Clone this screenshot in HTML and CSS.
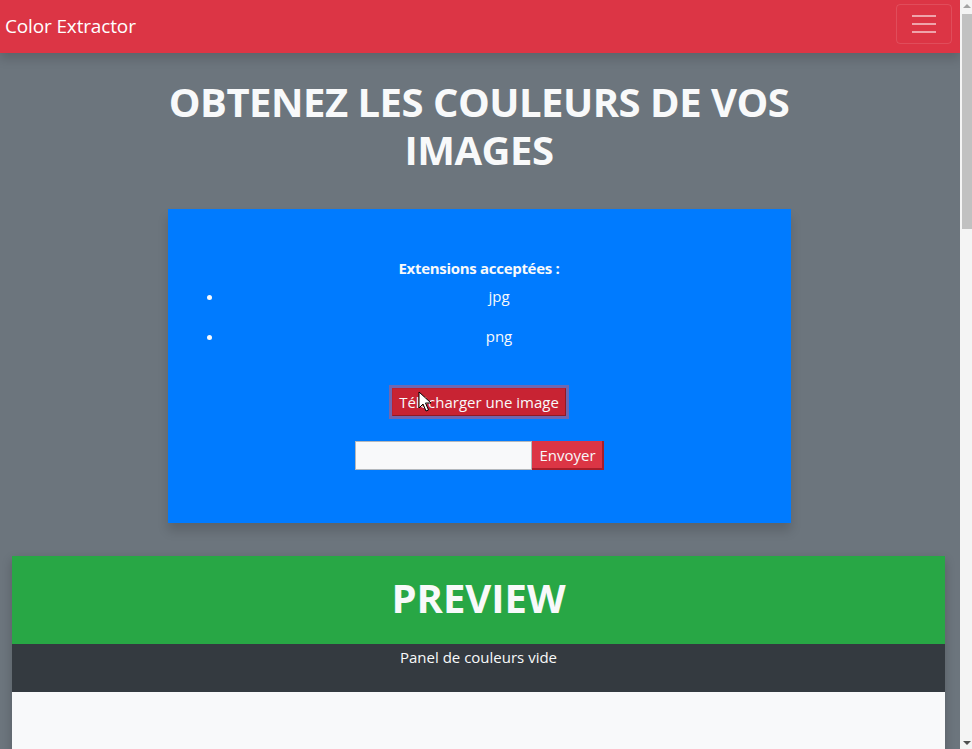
FILE: index.html
```html
<!DOCTYPE html>
<html lang="fr">
<head>
<meta charset="utf-8">
<title>Color Extractor</title>
<link rel="stylesheet" href="styles.css">
</head>
<body>
<div class="page">
  <nav class="navbar">
    <a class="brand" href="#">Color Extractor</a>
    <button class="toggler" type="button" aria-label="Menu">
      <span class="bar"></span><span class="bar"></span><span class="bar"></span>
    </button>
  </nav>
  <main class="main">
    <div class="container">
      <h1 class="title">OBTENEZ LES COULEURS DE VOS IMAGES</h1>
      <section class="upload">
        <p class="ext-title">Extensions acceptées :</p>
        <ul class="ext-list">
          <li>jpg</li>
          <li>png</li>
        </ul>
        <div class="upload-row">
          <span class="file-btn">Télécharger une image</span>
        </div>
        <form class="send-row">
          <input class="text-input" type="text">
          <button class="send-btn" type="button">Envoyer</button>
        </form>
      </section>
    </div>
    <section class="preview">
      <h2 class="preview-title">PREVIEW</h2>
      <div class="panel">Panel de couleurs vide</div>
      <div class="preview-body"></div>
    </section>
  </main>
</div>
<div class="scrollbar">
  <div class="arrow-up"></div>
  <div class="thumb"></div>
  <div class="arrow-down"></div>
</div>
<svg class="cursor" width="14" height="22" viewBox="0 0 14 22">
  <path d="M1 1 L1 17 L5 13 L8 20 L10.5 19 L7.5 12 L13 12 Z" fill="#fff" stroke="#000" stroke-width="1" stroke-linejoin="round"/>
</svg>
</body>
</html>
```
FILE: styles.css
```css
html, body {
  margin: 0;
  padding: 0;
  height: 100%;
  overflow: hidden;
}
body {
  font-family: "Open Sans", "Noto Sans", sans-serif;
  font-size: 16px;
  line-height: 24px;
  color: #f8f9fa;
  background: #6c757d;
}
.page {
  width: 960px;
  height: 100%;
  overflow: hidden;
}
.navbar {
  height: 53px;
  background: #dc3545;
  display: flex;
  align-items: center;
  justify-content: space-between;
  padding: 0 8px 0 5px;
  box-shadow: 0 6px 10px rgba(0,0,0,0.15);
  position: relative;
  z-index: 2;
}
.brand {
  color: #fff;
  text-decoration: none;
  font-size: 19px;
  line-height: 28px;
  letter-spacing: -0.15px;
  margin-top: -2px;
}
.toggler {
  width: 56px;
  height: 40px;
  border: 1px solid rgba(255,255,255,0.12);
  border-radius: 4px;
  background: transparent;
  display: flex;
  flex-direction: column;
  align-items: center;
  justify-content: center;
  gap: 6px;
  padding: 0;
  margin-top: -5px;
}
.toggler .bar {
  display: block;
  width: 24px;
  height: 2px;
  background: rgba(255,255,255,0.55);
}
.main {
  padding-top: 25px;
}
.container {
  width: 720px;
  margin: 0 auto;
  transform: translateX(-1px);
}
.title {
  margin: 0 0 35px;
  text-align: center;
  font-size: 40px;
  line-height: 48px;
  font-weight: 700;
  letter-spacing: -0.5px;
}
.upload {
  width: 623px;
  height: 314px;
  box-sizing: border-box;
  margin: 0 auto;
  background: #007bff;
  padding: 47px 16px 0;
  box-shadow: 0 8px 10px rgba(0,0,0,0.15);
  text-align: center;
}
.ext-title {
  margin: 0;
  font-weight: 700;
  font-size: 15px;
  letter-spacing: -0.3px;
}
.ext-list {
  margin: 4px 0 0;
  padding-left: 40px;
}
.ext-list li {
  height: 40px;
  font-size: 15px;
}
.upload-row {
  margin-top: 24px;
}
.file-btn {
  display: inline-block;
  background: #c82333;
  border: 1px solid #8e1a26;
  border-color: #bd2130 #8e1a26 #8e1a26 #bd2130;
  padding: 1px 6px;
  font-size: 15px;
  line-height: 24px;
  box-shadow: 0 0 0 3px #7067b0;
}
.send-row {
  margin: 25px 0 0;
  display: flex;
  justify-content: center;
}
.text-input {
  width: 177px;
  height: 29px;
  box-sizing: border-box;
  border: 1px solid #b4b8bc;
  background: #f8f9fa;
  margin: 0;
  padding: 0 4px;
}
.send-btn {
  height: 29px;
  width: 72px;
  box-sizing: border-box;
  margin: 0;
  background: #dc3545;
  color: #f8f9fa;
  border: none;
  border-right: 2px solid #a71d2a;
  border-bottom: 2px solid #a71d2a;
  font-family: inherit;
  font-size: 15px;
  padding: 0 0 0 2px;
}
.preview {
  margin: 33px 15px 0 12px;
  box-shadow: 0 4px 10px rgba(0,0,0,0.2);
}
.preview-title {
  margin: 0;
  height: 88px;
  background: #28a745;
  text-align: center;
  font-size: 40px;
  line-height: 84px;
  font-weight: 700;
  letter-spacing: 0;
}
.panel {
  background: #343a40;
  height: 48px;
  text-align: center;
  font-size: 15px;
  line-height: 26px;
}
.preview-body {
  background: #f8f9fa;
  height: 200px;
}
.scrollbar {
  position: fixed;
  top: 0;
  right: 0;
  width: 12px;
  height: 100%;
  background: #f4f4f4;
}
.thumb {
  position: absolute;
  top: 14px;
  left: 2px;
  right: 0;
  height: 215px;
  background: #c1c1c1;
}
.arrow-up {
  position: absolute;
  top: 4px;
  left: 3px;
  width: 0;
  height: 0;
  border-left: 4px solid transparent;
  border-right: 4px solid transparent;
  border-bottom: 4px solid #a3a3a3;
}
.arrow-down {
  position: absolute;
  bottom: 4px;
  left: 3px;
  width: 0;
  height: 0;
  border-left: 4px solid transparent;
  border-right: 4px solid transparent;
  border-top: 4px solid #505050;
}
.cursor {
  position: fixed;
  left: 418px;
  top: 391px;
}
```
